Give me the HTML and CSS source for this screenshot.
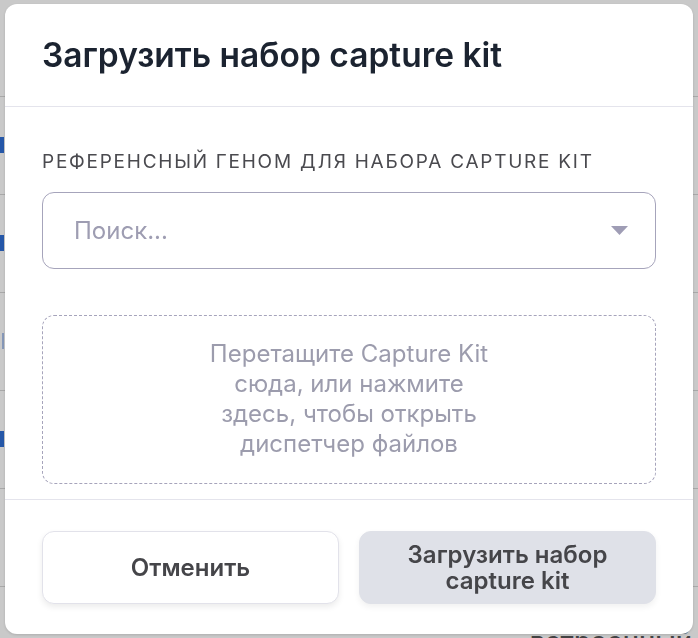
FILE: index.html
```html
<!DOCTYPE html>
<html lang="ru">
<head>
<meta charset="utf-8">
<title>Загрузить набор capture kit</title>
<link rel="stylesheet" href="styles.css">
</head>
<body>
<div class="page">
  <div class="bg-row"></div>
  <div class="bg-row"><span class="bg-mark"></span></div>
  <div class="bg-row"><span class="bg-mark"></span></div>
  <div class="bg-row"><span class="bg-mark faint"></span></div>
  <div class="bg-row"><span class="bg-mark"></span></div>
  <div class="bg-row"></div>
  <div class="bg-row last"><span class="bg-text">встроенный</span></div>
</div>
<div class="overlay"></div>
<div class="modal">
  <header class="modal-header">
    <h1 class="modal-title">Загрузить набор capture kit</h1>
  </header>
  <div class="modal-body">
    <div class="field-label">Референсный геном для набора capture kit</div>
    <div class="select">
      <span class="select-placeholder">Поиск...</span>
      <svg class="select-arrow" width="17" height="9" viewBox="0 0 17 9"><path d="M0 0H17L8.5 9Z" fill="#9f9db5"/></svg>
    </div>
    <div class="dropzone">
      <p class="dropzone-text">Перетащите Capture Kit сюда, или нажмите здесь, чтобы открыть диспетчер файлов</p>
    </div>
  </div>
  <footer class="modal-footer">
    <button class="btn btn-cancel">Отменить</button>
    <button class="btn btn-primary">Загрузить набор capture kit</button>
  </footer>
</div>
</body>
</html>
```

FILE: styles.css
```css
* { box-sizing: border-box; }
html, body { margin: 0; padding: 0; }
body {
  width: 698px;
  height: 638px;
  overflow: hidden;
  font-family: Inter, "Noto Sans", sans-serif;
  background: #ffffff;
}
.page {
  display: flex;
  flex-direction: column;
}
.bg-row {
  height: 98px;
  flex: none;
  border-bottom: 1px solid #d6d6d6;
  position: relative;
}
.bg-row:first-child { height: 97px; }
.bg-mark {
  position: absolute;
  left: 0;
  top: 40px;
  width: 4px;
  height: 16px;
  background: #2f6fd6;
}
.bg-mark.faint { background: #a9c0ea; width: 2px; left: 2px; }
.bg-text {
  position: absolute;
  right: 6px;
  top: 38px;
  font-size: 27px;
  font-weight: 500;
  color: #555;
}
.overlay {
  position: fixed;
  inset: 0;
  background: rgba(0, 0, 0, 0.21);
}
.modal {
  position: fixed;
  left: 5px;
  top: 4px;
  width: 688px;
  height: 630px;
  background: #fff;
  border-radius: 12px;
  display: flex;
  flex-direction: column;
  overflow: hidden;
  box-shadow: 0 1px 3px rgba(0,0,0,0.15);
}
.modal-header {
  height: 103px;
  flex: none;
  display: flex;
  align-items: center;
  padding: 0 37px;
  border-bottom: 1px solid #e4e4ec;
}
.modal-title {
  margin: 0;
  font-size: 33.5px;
  line-height: 40px;
  font-weight: 600;
  color: #1b2330;
}
.modal-body {
  flex: 1;
  overflow: hidden;
  padding: 44px 37px 0;
  display: flex;
  flex-direction: column;
}
.field-label {
  font-size: 19px;
  line-height: 22px;
  text-transform: uppercase;
  letter-spacing: 1.75px;
  color: #4a4a4f;
  white-space: nowrap;
}
.select {
  margin-top: 19px;
  height: 77px;
  border: 1px solid #a6a4bb;
  border-radius: 12px;
  display: flex;
  align-items: center;
  justify-content: space-between;
  padding: 0 27px 0 31px;
  flex: none;
}
.select-placeholder {
  font-size: 24px;
  color: #9e9db2;
}
.select-arrow { display: block; }
.dropzone {
  margin-top: 46px;
  height: 169px;
  flex: none;
  border: 1px dashed #a6a4bb;
  border-radius: 12px;
  display: flex;
  align-items: center;
  justify-content: center;
}
.dropzone-text {
  margin: 0 0 2px;
  max-width: 292px;
  text-align: center;
  font-size: 24px;
  line-height: 30px;
  color: #9c9cad;
}
.modal-footer {
  flex: none;
  height: 135px;
  border-top: 1px solid #e4e4ec;
  display: grid;
  grid-template-columns: 1fr 1fr;
  gap: 20px;
  padding: 31px 37px 30px;
}
.btn {
  font-family: Inter, "Noto Sans", sans-serif;
  font-size: 24px;
  font-weight: 600;
  line-height: 26px;
  color: #454549;
  border-radius: 12px;
  height: 73px;
  padding: 0 30px;
  cursor: pointer;
}
.btn-cancel {
  background: #fff;
  border: 1px solid #e2e2ea;
  box-shadow: 0 3px 6px rgba(0,0,0,0.08);
}
.btn-primary {
  background: #dfe1e8;
  border: 1px solid #dfe1e8;
  box-shadow: 0 3px 6px rgba(0,0,0,0.06);
}
```
